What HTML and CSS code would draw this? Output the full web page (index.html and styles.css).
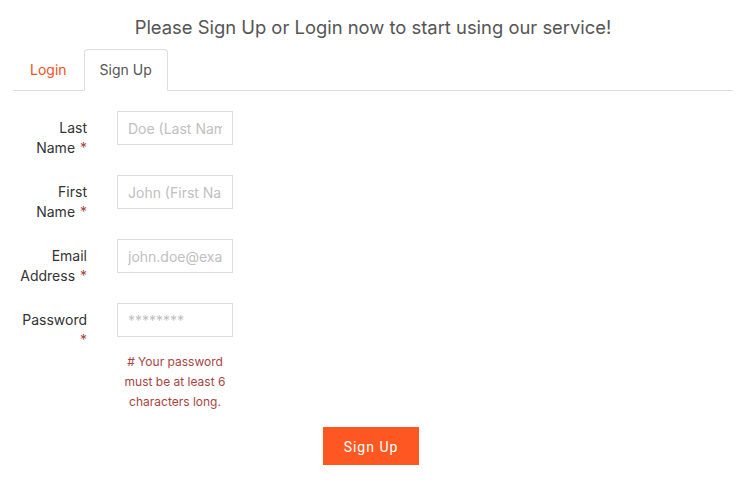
FILE: index.html
```html
<!DOCTYPE html>
<html>
<head>
<meta charset="utf-8">
<link rel="stylesheet" href="styles.css">
</head>
<body>
<div class="page">
  <h1 class="title">Please Sign Up or Login now to start using our service!</h1>
  <ul class="tabs">
    <li class="tab tab-login">Login</li>
    <li class="tab tab-active">Sign Up</li>
  </ul>
  <form class="form">
    <div class="row">
      <label class="label">Last Name <span class="req">*</span></label>
      <div class="field"><input class="input" placeholder="Doe (Last Name)"></div>
    </div>
    <div class="row">
      <label class="label">First Name <span class="req">*</span></label>
      <div class="field"><input class="input" placeholder="John (First Name)"></div>
    </div>
    <div class="row">
      <label class="label">Email Address <span class="req">*</span></label>
      <div class="field"><input class="input" placeholder="john.doe@example.com"></div>
    </div>
    <div class="row">
      <label class="label">Password <span class="req">*</span></label>
      <div class="field">
        <input class="input" type="password" placeholder="********">
        <p class="help"># Your password must be at least 6 characters long.</p>
      </div>
    </div>
    <div class="actions">
      <button type="button" class="btn">Sign Up</button>
    </div>
  </form>
</div>
</body>
</html>
```

FILE: styles.css
```css
* { box-sizing: border-box; }
html, body { margin: 0; padding: 0; background: #fff; }
body {
  font-family: Inter, "Liberation Sans", Arial, sans-serif;
  font-size: 14px;
  line-height: 20px;
  color: #333;
}
.page {
  width: 720px;
  margin-left: 13px;
}
.title {
  margin: 0;
  padding-top: 15px;
  height: 49px;
  font-size: 18.4px;
  line-height: 24px;
  font-weight: normal;
  color: #555;
  text-align: center;
}
.tabs {
  list-style: none;
  margin: 0;
  padding: 0;
  display: flex;
  border-bottom: 1px solid #ddd;
}
.tab {
  padding: 10px 16px;
  border: 1px solid transparent;
  border-radius: 4px 4px 0 0;
  margin-bottom: -1px;
  font-size: 14px;
  line-height: 20px;
}
.tab-login { color: #f4511e; }
.tab-active {
  color: #555;
  background: #fff;
  border-color: #ddd #ddd transparent #ddd;
  padding: 10px 15px;
}
.form {
  padding-top: 20px;
}
.row {
  display: flex;
  align-items: flex-start;
  margin-bottom: 17px;
}
.label {
  width: 67px;
  margin-left: 7px;
  padding-top: 7px;
  text-align: right;
  color: #333;
  font-size: 14px;
  line-height: 20px;
}
.req { color: #a94442; margin-left: 1px; }
.field {
  width: 116px;
  margin-left: 30px;
}
.input {
  display: block;
  width: 116px;
  height: 34px;
  padding: 6px 10px;
  border: 1px solid #ddd;
  border-radius: 0;
  font-family: inherit;
  font-size: 14px;
  color: #555;
  outline: none;
}
.input::placeholder { color: #c0c0c0; }
.help {
  margin: 15px 0 0;
  text-align: center;
  font-size: 12px;
  line-height: 20px;
  color: #a94442;
}
.actions {
  display: flex;
  justify-content: center;
  padding-right: 4px;
  margin-top: -2px;
}
.btn {
  width: 96px;
  height: 38px;
  border: none;
  border-radius: 0;
  background: #ff5722;
  color: #fff;
  font-family: Roboto, "Liberation Sans", sans-serif;
  font-size: 14px;
  letter-spacing: 1px;
  padding-top: 2px;
}
```
